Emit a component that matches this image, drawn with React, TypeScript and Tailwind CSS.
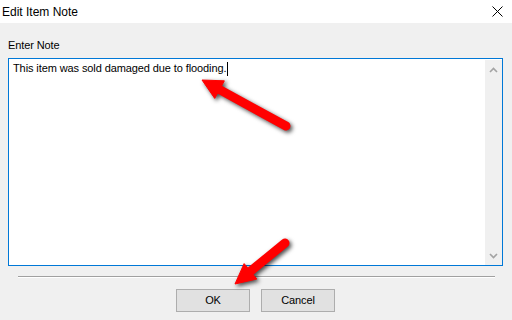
import React from 'react';

const font = { fontFamily: '"Liberation Sans", Arial, sans-serif' };

const Arrow = ({ tail, tip }: { tail: [number, number]; tip: [number, number] }) => {
  const dx = tip[0] - tail[0];
  const dy = tip[1] - tail[1];
  const len = Math.hypot(dx, dy);
  const ux = dx / len;
  const uy = dy / len;
  const nx = -uy;
  const ny = ux;
  const head = 20;
  const half = 10;
  const bx = tip[0] - ux * head;
  const by = tip[1] - uy * head;
  const pts = `${tip[0]},${tip[1]} ${bx + nx * half},${by + ny * half} ${bx - nx * half},${by - ny * half}`;
  return (
    <g>
      <line x1={tail[0]} y1={tail[1]} x2={bx + ux * 2} y2={by + uy * 2} stroke="#ff0000" strokeWidth={9} strokeLinecap="round" />
      <polygon points={pts} fill="#ff0000" stroke="#ff0000" strokeWidth={1} strokeLinejoin="round" />
    </g>
  );
};

export default function App() {
  return (
    <div className="relative w-[512px] h-[320px] flex flex-col overflow-hidden text-[11px] tracking-[-0.1px] text-black" style={font}>
      {/* title bar */}
      <div className="h-[23px] bg-white flex items-center justify-between pl-[2px] pr-[9px]">
        <span className="text-[12px] tracking-normal text-[#000]">Edit Item Note</span>
        <svg width="11" height="11" viewBox="0 0 11 11">
          <path d="M0.5 0.5 L10.5 10.5 M10.5 0.5 L0.5 10.5" stroke="#000" strokeWidth="1" />
        </svg>
      </div>

      {/* body */}
      <div className="flex-1 bg-[#f0f0f0] flex flex-col px-[8px] pt-[15px]">
        <div className="h-[15px] leading-[15px]">Enter Note</div>
        <div className="mt-[5px] h-[208px] w-[495px] border border-[#0078d7] bg-white flex">
          <div className="flex-1 pl-[4px] pt-[2px] leading-[15px] flex items-start">
            <span>This item was sold damaged due to flooding.</span>
            <span className="ml-[1px] mt-[1px] w-[1px] h-[14px] bg-black" />
          </div>
          <div className="w-[17px] mt-[1px] bg-[#f0f0f0] flex flex-col items-center justify-between pt-[7px] pb-[6px]">
            <svg width="9" height="6" viewBox="0 0 9 6">
              <path d="M1 5 L4.5 1.5 L8 5" stroke="#a3a3a3" strokeWidth="1.6" fill="none" />
            </svg>
            <svg width="9" height="6" viewBox="0 0 9 6">
              <path d="M1 1 L4.5 4.5 L8 1" stroke="#a3a3a3" strokeWidth="1.6" fill="none" />
            </svg>
          </div>
        </div>

        <div className="mt-[10px] ml-[10px] mr-[9px] h-[1px] bg-[#a0a0a0]" />
        <div className="ml-[10px] mr-[9px] h-[1px] bg-white" />

        <div className="mt-[11px] flex justify-center gap-[11px] pr-[1px]">
          <button className="w-[74px] h-[23px] bg-[#e1e1e1] border border-[#adadad] text-[11px]">OK</button>
          <button className="w-[74px] h-[23px] bg-[#e1e1e1] border border-[#adadad] text-[11px]">Cancel</button>
        </div>
      </div>

      {/* annotation arrows */}
      <svg className="absolute inset-0 pointer-events-none drop-shadow-[2px_2px_2px_rgba(0,0,0,0.7)]" width="512" height="320">
        <Arrow tail={[286, 126]} tip={[202, 80]} />
        <Arrow tail={[285, 243]} tip={[235, 284]} />
      </svg>
    </div>
  );
}
